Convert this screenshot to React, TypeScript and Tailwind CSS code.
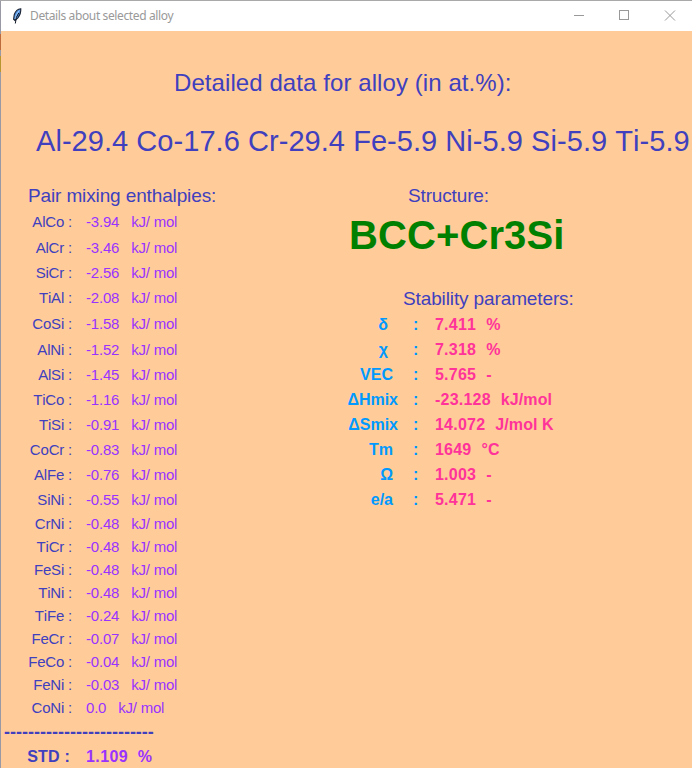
const pairs = [
  { name: "AlCo", value: "-3.94", h: "h-[27px]" },
  { name: "AlCr", value: "-3.46", h: "h-[25px]" },
  { name: "SiCr", value: "-2.56", h: "h-[25px]" },
  { name: "TiAl", value: "-2.08", h: "h-[25px]" },
  { name: "CoSi", value: "-1.58", h: "h-[27px]" },
  { name: "AlNi", value: "-1.52", h: "h-[25px]" },
  { name: "AlSi", value: "-1.45", h: "h-[25px]" },
  { name: "TiCo", value: "-1.16", h: "h-[25px]" },
  { name: "TiSi", value: "-0.91", h: "h-[25px]" },
  { name: "CoCr", value: "-0.83", h: "h-[25px]" },
  { name: "AlFe", value: "-0.76", h: "h-[25px]" },
  { name: "SiNi", value: "-0.55", h: "h-[25px]" },
  { name: "CrNi", value: "-0.48", h: "h-[23px]" },
  { name: "TiCr", value: "-0.48", h: "h-[23px]" },
  { name: "FeSi", value: "-0.48", h: "h-[23px]" },
  { name: "TiNi", value: "-0.48", h: "h-[23px]" },
  { name: "TiFe", value: "-0.24", h: "h-[23px]" },
  { name: "FeCr", value: "-0.07", h: "h-[23px]" },
  { name: "FeCo", value: "-0.04", h: "h-[23px]" },
  { name: "FeNi", value: "-0.03", h: "h-[23px]" },
  { name: "CoNi", value: "0.0", h: "h-[23px]" },
];

const parameters = [
  { name: "δ", value: "7.411", unit: "%", pad: "pr-[12px]" },
  { name: "χ", value: "7.318", unit: "%", pad: "pr-[12px]" },
  { name: "VEC", value: "5.765", unit: "-", pad: "pr-[7px]" },
  { name: "ΔHmix", value: "-23.128", unit: "kJ/mol", pad: "pr-[2px]" },
  { name: "ΔSmix", value: "14.072", unit: "J/mol K", pad: "pr-[2px]" },
  { name: "Tm", value: "1649", unit: "°C", pad: "pr-[7px]" },
  { name: "Ω", value: "1.003", unit: "-", pad: "pr-[7px]" },
  { name: "e/a", value: "5.471", unit: "-", pad: "pr-[7px]" },
];

function Feather() {
  return (
    <svg width="16" height="16" viewBox="0 0 16 16" className="mt-[-1px]">
      <path d="M11.8 .8C9 1 6.3 3.6 5.2 6.8L4.6 11.2 6 12.4 8.9 9.8C10.7 7.7 12 4.6 11.8 .8Z" fill="#4b8ee0" stroke="#1b2230" strokeWidth="1.1" />
      <path d="M10.3 2.5 7.4 6.5 6.2 11" fill="none" stroke="#a8d0f8" strokeWidth="1" />
      <path d="M9.8 5 7.4 9.3 6.3 15.5" fill="none" stroke="#111827" strokeWidth="1" />
    </svg>
  );
}

function TitleBar() {
  return (
    <header className="flex h-[30px] items-center bg-white pl-[8px]">
      <Feather />
      <h1 className="ml-[5px] w-[500px] whitespace-pre font-['Noto_Sans',sans-serif] text-[12px] leading-[16px] tracking-[-0.38px] text-[#999]">Details about selected alloy</h1>
      <svg width="120" height="29" viewBox="0 0 120 29" className="ml-auto mb-px shrink-0" fill="none" stroke="#999" strokeWidth="1" shapeRendering="crispEdges">
        <path d="M2 14.5H12" />
        <path d="M47.5 9.5H56.5V18.5H47.5Z" />
        <path d="M93 9.5 103 19.5M103 9.5 93 19.5" shapeRendering="auto" />
      </svg>
    </header>
  );
}

export default function App() {
  return (
    <div className="flex h-[768px] w-[692px] flex-col overflow-hidden border-t border-[#a9a9a9] bg-[#ffcc99] font-['Liberation_Sans',Arial,sans-serif] text-[#4040bf] [font-kerning:none]">
      <div className="flex h-[767px]">
        <div className="flex w-px shrink-0 flex-col bg-[#9999a6]">
          <div className="mt-[33px] h-[16px] bg-[#bd6b3c]" />
          <div className="mt-[6px] h-[16px] bg-[#b7962f]" />
        </div>
        <div className="flex w-[691px] shrink-0 flex-col overflow-hidden">
          <TitleBar />
          <h2 className="mt-[37px] h-[30px] whitespace-pre pl-[173px] text-[24px] leading-[30px] tracking-[0.08px]">Detailed data for alloy (in at.%):</h2>
          <p className="mt-[25px] h-[36px] whitespace-pre pl-[35px] text-[29px] leading-[36px] tracking-[0.05px]">Al-29.4 Co-17.6 Cr-29.4 Fe-5.9 Ni-5.9 Si-5.9 Ti-5.9</p>
          <main className="mt-[25px] flex">
            <section className="w-[345px]">
              <h3 className="h-[24px] whitespace-pre pl-[27px] text-[19px] leading-[24px] tracking-[-0.13px]">Pair mixing enthalpies:</h3>
              <div className="pt-px text-[15px]">
                {pairs.map((p) => (
                  <div key={p.name} className={`flex items-center ${p.h}`}>
                    <span className="w-[71px] whitespace-pre text-right tracking-[-0.2px]">{p.name} :</span>
                    <span className="ml-[14px] whitespace-pre tracking-[-0.2px] text-[#9933ff]">{p.value}</span>
                    <span className="ml-[12px] whitespace-pre tracking-[-0.22px] text-[#9933ff]">kJ/ mol</span>
                  </div>
                ))}
              </div>
              <div className="h-[24px] whitespace-pre pl-[3px] text-[18px] font-bold leading-[24px]">-------------------------</div>
              <div className="flex h-[25px] items-center text-[16px] font-bold">
                <span className="w-[69px] whitespace-pre text-right tracking-[0.2px]">STD :</span>
                <span className="ml-[16px] whitespace-pre tracking-[0.4px] text-[#9933ff]">1.109  %</span>
              </div>
            </section>
            <section className="w-[340px]">
              <h3 className="h-[24px] whitespace-pre pl-[62px] text-[19px] leading-[24px] tracking-[-0.15px]">Structure:</h3>
              <p className="h-[54px] whitespace-pre pl-[3px] text-[40px] font-bold leading-[54px] tracking-[0.1px] text-[green]">BCC+Cr3Si</p>
              <h3 className="mt-[25px] h-[24px] whitespace-pre pl-[57px] text-[19px] leading-[24px] tracking-[-0.12px]">Stability parameters:</h3>
              <div className="pt-px text-[16px] font-bold">
                {parameters.map((p) => (
                  <div key={p.name} className="flex h-[25px] items-center">
                    <span className={`w-[54px] text-right text-[#0099ff] ${p.pad}`}>{p.name}</span>
                    <span className="ml-[13px] w-[7px] text-[#0099ff]">:</span>
                    <span className="ml-[15px] whitespace-pre tracking-[0.22px] text-[#ff3399]">{p.value}</span>
                    <span className="ml-[10px] whitespace-pre tracking-[0.1px] text-[#ff3399]">{p.unit}</span>
                  </div>
                ))}
              </div>
            </section>
          </main>
        </div>
      </div>
    </div>
  );
}
